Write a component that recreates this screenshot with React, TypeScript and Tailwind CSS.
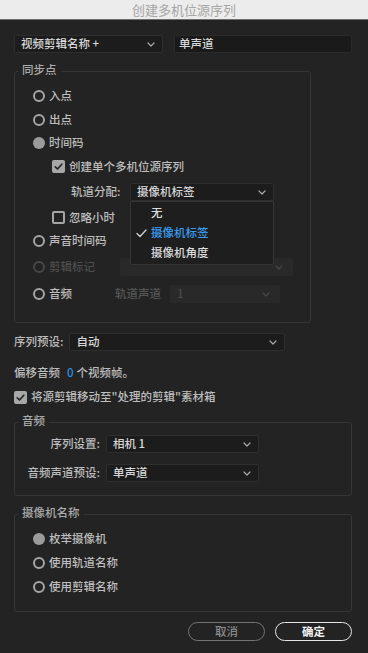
import React from "react";

const Chevron = ({ color = "#a8a8a8" }: { color?: string }) => (
  <svg width="8" height="5" viewBox="0 0 8 5" className="shrink-0">
    <path d="M1 1l3 3 3-3" stroke={color} strokeWidth="1.2" fill="none" strokeLinecap="round" strokeLinejoin="round" />
  </svg>
);

const Radio = ({ checked = false, disabled = false }: { checked?: boolean; disabled?: boolean }) => {
  if (checked) return <span className="w-[12px] h-[12px] rounded-full bg-[#9b9b9b] shrink-0" />;
  return (
    <span
      className={
        disabled
          ? "w-[12px] h-[12px] rounded-full border-2 border-[#474747] shrink-0"
          : "w-[12px] h-[12px] rounded-full border-2 border-[#a5a5a5] shrink-0"
      }
    />
  );
};

const Checkbox = ({ checked = false }: { checked?: boolean }) =>
  checked ? (
    <span className="w-[13px] h-[13px] rounded-[2px] bg-[#a8a8a8] flex items-center justify-center shrink-0">
      <svg width="11" height="11" viewBox="0 0 11 11">
        <path d="M2.3 5.8l2.2 2.2 4.3-4.8" stroke="#262626" strokeWidth="1.7" fill="none" strokeLinecap="round" strokeLinejoin="round" />
      </svg>
    </span>
  ) : (
    <span className="w-[13px] h-[13px] rounded-[2px] border-2 border-[#a5a5a5] shrink-0" />
  );

const Dropdown = ({ text, w }: { text: string; w: string }) => (
  <div className={`${w} h-[18px] flex items-center justify-between bg-[#1c1c1c] border border-[#2e2e2e] rounded-[2px] pl-[6px] pr-[7px] text-[#d8d8d8]`}>
    <span>{text}</span>
    <Chevron />
  </div>
);

const DisabledDropdown = ({ text, w }: { text: string; w: string }) => (
  <div className={`${w} h-[18px] flex items-center justify-between bg-[#292929] rounded-[2px] pl-[7px] pr-[10px] text-[#4a4a4a]`}>
    <span>{text}</span>
    <Chevron color="#474747" />
  </div>
);

const Legend = ({ children }: { children: React.ReactNode }) => (
  <span className="absolute left-[3px] top-[-8px] px-[4px] bg-[#232323] text-[#ababab] leading-none">{children}</span>
);

export default function App() {
  return (
    <div className="w-[368px] h-[653px] bg-[#232323] overflow-hidden font-['Noto_Sans_CJK_SC','Noto_Sans',sans-serif] font-medium text-[11.5px] leading-none text-[#bdbdbd]">
      <div className="h-[20px] bg-[#ececec] border-b border-[#6e6e6e] flex items-center justify-center text-[13px] font-normal text-[#a6a6a6]">
        创建多机位源序列
      </div>
      <div className="pl-[14px] pr-[16px]">
        <div className="mt-[15px] flex h-[18px] gap-[11px]">
          <Dropdown text="视频剪辑名称 +" w="w-[149px]" />
          <div className="flex-1 h-[18px] flex items-center bg-[#1a1a1a] border border-[#2a2a2a] rounded-[2px] pl-[4px] text-[#d8d8d8]">
            单声道
          </div>
        </div>

        <div className="mt-[18px] relative w-[297px] border border-[#363636] rounded-[3px] pt-[12px] pb-[15px] pl-[18px]">
          <Legend>同步点</Legend>
          <div className="h-[24px] flex items-center gap-[4px]">
            <Radio />
            <span>入点</span>
          </div>
          <div className="h-[23px] flex items-center gap-[4px]">
            <Radio />
            <span>出点</span>
          </div>
          <div className="h-[24px] flex items-center gap-[4px]">
            <Radio checked />
            <span>时间码</span>
          </div>
          <div className="h-[23px] flex items-center gap-[4px] ml-[19px]">
            <Checkbox checked />
            <span>创建单个多机位源序列</span>
          </div>
          <div className="h-[28px] flex items-center ml-[38px]">
            <span className="w-[59px]">轨道分配:</span>
            <div className="relative">
              <Dropdown text="摄像机标签" w="w-[144px]" />
              <div className="absolute left-0 top-[18px] w-[144px] z-10 bg-[#1e1e1e] border border-[#353535] rounded-b-[2px] pt-[1px] pb-[1px] text-[#dcdcdc]">
                <div className="h-[20px] flex items-center pl-[20px]">无</div>
                <div className="h-[20px] flex items-center relative pl-[20px] text-[#3a9df0]">
                  <svg width="11" height="9" viewBox="0 0 11 9" className="absolute left-[5px] top-[6px]">
                    <path d="M1 4.5l3 3 6-6.5" stroke="#d0d0d0" strokeWidth="1.3" fill="none" strokeLinecap="round" strokeLinejoin="round" />
                  </svg>
                  摄像机标签
                </div>
                <div className="h-[20px] flex items-center pl-[20px]">摄像机角度</div>
              </div>
            </div>
          </div>
          <div className="h-[23px] flex items-center gap-[4px] ml-[19px]">
            <Checkbox />
            <span>忽略小时</span>
          </div>
          <div className="h-[24px] flex items-center gap-[4px]">
            <Radio />
            <span>声音时间码</span>
          </div>
          <div className="h-[28px] flex items-center">
            <div className="w-[87px] flex items-center gap-[4px]">
              <Radio disabled />
              <span className="text-[#4d4d4d]">剪辑标记</span>
            </div>
            <DisabledDropdown text="" w="w-[173px]" />
          </div>
          <div className="h-[26px] flex items-center">
            <div className="w-[82px] flex items-center gap-[4px]">
              <Radio />
              <span>音频</span>
            </div>
            <span className="w-[55px] text-[#555555]">轨道声道</span>
            <DisabledDropdown text="1" w="w-[110px]" />
          </div>
        </div>

        <div className="mt-[10px] flex items-center h-[18px] gap-[6px]">
          <span>序列预设:</span>
          <Dropdown text="自动" w="w-[216px]" />
        </div>

        <div className="mt-[14px] h-[16px] flex items-center">
          <span>偏移音频</span>
          <span className="ml-[7px] text-[#2f8fe0]">0</span>
          <span className="ml-[3px]">个视频帧。</span>
        </div>

        <div className="mt-[8px] h-[16px] flex items-center gap-[4px]">
          <Checkbox checked />
          <span>将源剪辑移动至"处理的剪辑"素材箱</span>
        </div>

        <div className="mt-[17px] relative border border-[#363636] rounded-[3px] pt-[12px] pb-[13px] flex flex-col gap-[11px]">
          <Legend>音频</Legend>
          <div className="flex items-center h-[18px]">
            <span className="w-[85px] text-right">序列设置:</span>
            <div className="ml-[6px]">
              <Dropdown text="相机 1" w="w-[153px]" />
            </div>
          </div>
          <div className="flex items-center h-[18px]">
            <span className="w-[85px] text-right">音频声道预设:</span>
            <div className="ml-[6px]">
              <Dropdown text="单声道" w="w-[153px]" />
            </div>
          </div>
        </div>

        <div className="mt-[18px] relative border border-[#363636] rounded-[3px] pt-[12px] pb-[12px] pl-[18px]">
          <Legend>摄像机名称</Legend>
          <div className="h-[24px] flex items-center gap-[4px]">
            <Radio checked />
            <span>枚举摄像机</span>
          </div>
          <div className="h-[24px] flex items-center gap-[4px]">
            <Radio />
            <span>使用轨道名称</span>
          </div>
          <div className="h-[24px] flex items-center gap-[4px]">
            <Radio />
            <span>使用剪辑名称</span>
          </div>
        </div>

        <div className="mt-[10px] flex justify-end gap-[10px]">
          <div className="w-[77px] h-[19px] rounded-full border-[1.5px] border-[#747474] flex items-center justify-center text-[#8a8a8a]">
            取消
          </div>
          <div className="w-[77px] h-[19px] rounded-full border-[1.5px] border-[#e6e6e6] flex items-center justify-center text-[#f2f2f2] font-bold">
            确定
          </div>
        </div>
      </div>
    </div>
  );
}
